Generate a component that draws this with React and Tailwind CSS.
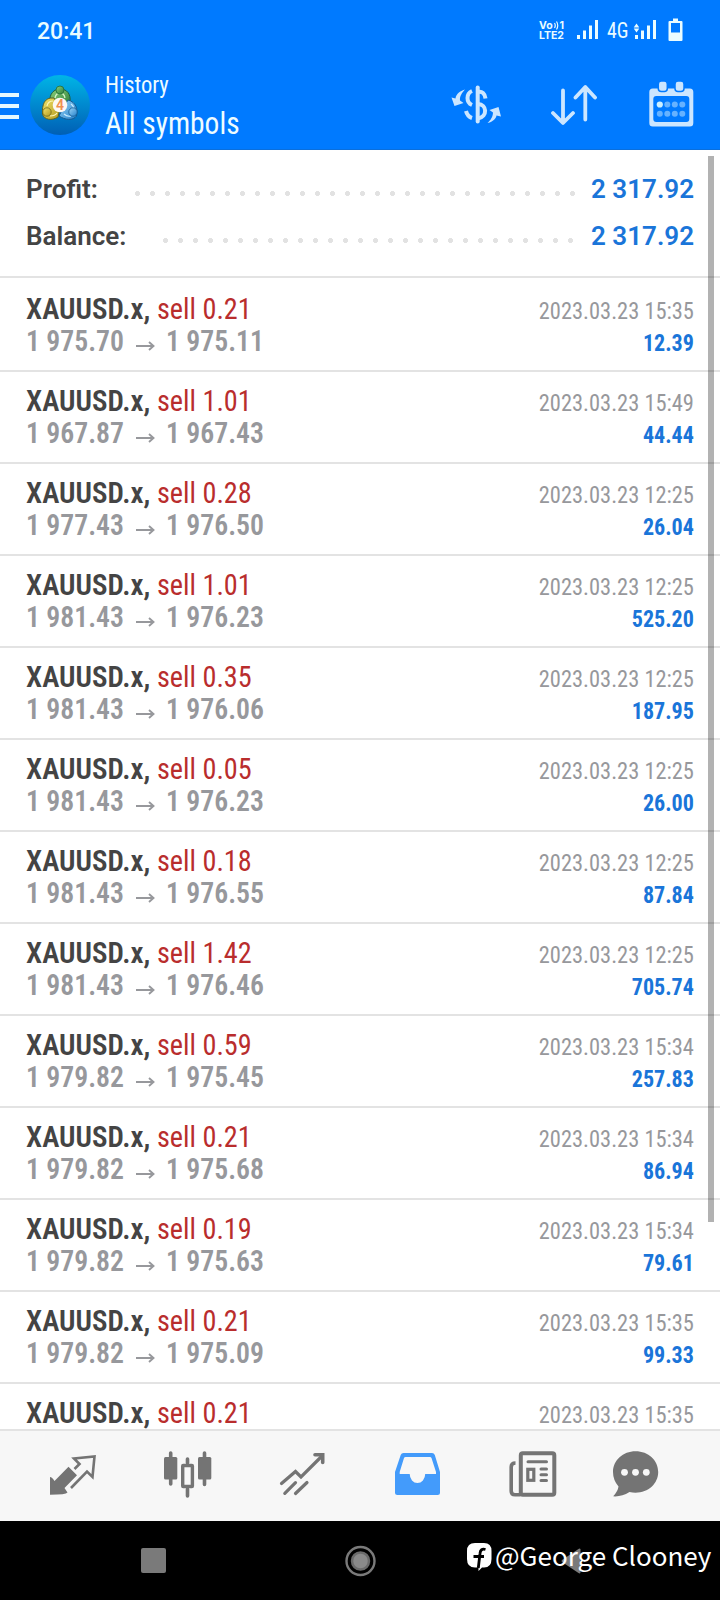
const trades = [
  { lots: '0.21', open: '1 975.70', close: '1 975.11', time: '2023.03.23 15:35', profit: '12.39' },
  { lots: '1.01', open: '1 967.87', close: '1 967.43', time: '2023.03.23 15:49', profit: '44.44' },
  { lots: '0.28', open: '1 977.43', close: '1 976.50', time: '2023.03.23 12:25', profit: '26.04' },
  { lots: '1.01', open: '1 981.43', close: '1 976.23', time: '2023.03.23 12:25', profit: '525.20' },
  { lots: '0.35', open: '1 981.43', close: '1 976.06', time: '2023.03.23 12:25', profit: '187.95' },
  { lots: '0.05', open: '1 981.43', close: '1 976.23', time: '2023.03.23 12:25', profit: '26.00' },
  { lots: '0.18', open: '1 981.43', close: '1 976.55', time: '2023.03.23 12:25', profit: '87.84' },
  { lots: '1.42', open: '1 981.43', close: '1 976.46', time: '2023.03.23 12:25', profit: '705.74' },
  { lots: '0.59', open: '1 979.82', close: '1 975.45', time: '2023.03.23 15:34', profit: '257.83' },
  { lots: '0.21', open: '1 979.82', close: '1 975.68', time: '2023.03.23 15:34', profit: '86.94' },
  { lots: '0.19', open: '1 979.82', close: '1 975.63', time: '2023.03.23 15:34', profit: '79.61' },
  { lots: '0.21', open: '1 979.82', close: '1 975.09', time: '2023.03.23 15:35', profit: '99.33' },
  { lots: '0.21', open: '1 979.82', close: '1 975.09', time: '2023.03.23 15:35', profit: '99.33' },
];

function StatusBar() {
  return (
    <div className="flex h-[60px] items-center pl-[37px] pr-[37px] text-[#eafcff]">
      <span className="flex-1 pt-[3px] text-[23px] font-medium leading-[57px]">20:41</span>
      <div className="mr-[13px] w-[25px] pt-px font-['Inter'] text-[10.500px] font-bold leading-[10px]">
        <div className="flex items-center justify-between">
          <span>Vo</span>
          <svg width="5" height="9" viewBox="0 0 5 9" fill="none" stroke="currentColor" strokeWidth="1.200">
            <path d="M0.500 2Q2 4.500 0.500 7M2.500 0.500Q5 4.500 2.500 8.500" />
          </svg>
          <span>1</span>
        </div>
        <div>LTE2</div>
      </div>
      <svg width="21" height="20" viewBox="0 0 21 20" fill="currentColor">
        <path d="M0 15h3v4H0zM6 10.500h3V19H6zM12 5.500h3V19h-3zM18 0h3v19h-3z" />
      </svg>
      <span className="ml-[9px] w-[25px] pt-px">
        <span className="inline-block origin-left scale-x-90 font-['Roboto_Condensed'] text-[22px] leading-[58px]">4G</span>
      </span>
      <svg width="24" height="20" viewBox="0 0 24 20" fill="currentColor">
        <path d="M3 15h3v4H3zM9 10.500h3V19H9zM15 5.500h3V19h-3zM21 0h3v19h-3z" />
        <path d="M4.500 3.500L7.300 7.500H1.700zM4.500 12.500L7.300 8.500H1.700z" />
      </svg>
      <svg className="ml-3" width="15" height="24" viewBox="0 0 15 24">
        <path d="M5 0.500h5v2.500h3.500q1 0 1 1V22q0 1-1 1h-12q-1 0-1-1V4q0-1 1-1H5z" fill="currentColor" />
        <path d="M3 5h9v9.500H3z" fill="#007aff" />
      </svg>
    </div>
  );
}

function Logo() {
  return (
    <svg width="60" height="60" viewBox="0 0 60 60">
      <defs>
        <linearGradient id="disc" x1="0" y1="0" x2="0" y2="1">
          <stop offset="0" stopColor="#00b5e6" />
          <stop offset="0.5" stopColor="#0089cf" />
          <stop offset="1" stopColor="#005fb4" />
        </linearGradient>
        <linearGradient id="green" x1="0" y1="0" x2="1" y2="1">
          <stop offset="0" stopColor="#8fd37c" />
          <stop offset="1" stopColor="#2b7d3a" />
        </linearGradient>
        <linearGradient id="yellow" x1="0" y1="0" x2="1" y2="1">
          <stop offset="0" stopColor="#f2e36a" />
          <stop offset="1" stopColor="#b39a20" />
        </linearGradient>
        <linearGradient id="blue" x1="0" y1="0" x2="1" y2="1">
          <stop offset="0" stopColor="#9ad4f6" />
          <stop offset="1" stopColor="#2482cc" />
        </linearGradient>
      </defs>
      <circle cx="30" cy="30" r="30" fill="url(#disc)" />
      <path d="M20 27C19 19 24 14 30 14C37 14 41 19 40 27L34 30H26Z" fill="url(#green)" stroke="#1f5f3c" strokeWidth="1" />
      <path d="M24 23C14 22 12 30 12.500 39C14 45 22 46 28 42L30 33Z" fill="url(#yellow)" stroke="#5f6420" strokeWidth="1" />
      <path d="M38 25C46 27 48 34 46.500 41C43 46 35 45 29 41L33 33Z" fill="url(#blue)" stroke="#145a92" strokeWidth="1" />
      <path d="M25 23Q26 18 30 18T35 23" fill="none" stroke="#d4f2c4" strokeWidth="1.300" />
      <path d="M17 31Q18 26 23 26M20 41Q25 41 27 38" fill="none" stroke="#fbf6b8" strokeWidth="1.200" />
      <path d="M41 29Q44 31 43.500 34M34 39Q37 42 41 41" fill="none" stroke="#c8ecff" strokeWidth="1.200" />
      <circle cx="30" cy="15" r="4" fill="url(#green)" stroke="#1f6b37" strokeWidth="0.800" />
      <circle cx="17" cy="37" r="4.200" fill="url(#yellow)" stroke="#6f6a1c" strokeWidth="0.800" />
      <circle cx="43" cy="37" r="4.200" fill="url(#blue)" stroke="#145a92" strokeWidth="0.800" />
      <circle cx="30" cy="30" r="7.300" fill="#fdf8f4" />
      <text x="30" y="35" textAnchor="middle" fontSize="14" fontWeight="600" fill="#f0904f">4</text>
    </svg>
  );
}

function Header() {
  return (
    <header className="h-[150px] shrink-0 border-b border-[#0b6fdc] bg-[#007aff]">
      <StatusBar />
      <div className="flex h-[89px] items-center pr-[26px]">
        <div className="mt-[33px] flex w-[19px] flex-col gap-[7px] self-start">
          <div className="h-1 bg-[#e4f8ff]" />
          <div className="h-1 bg-[#e4f8ff]" />
          <div className="h-1 bg-[#e4f8ff]" />
        </div>
        <div className="ml-[11px]">
          <Logo />
        </div>
        <div className="ml-[15px] flex-1 pt-0.5 font-['Roboto_Condensed'] text-[#eefcff]">
          <div className="origin-left scale-x-[0.94] text-[24px] leading-[34px]">History</div>
          <div className="origin-left scale-x-[0.92] text-[32px] leading-[42px]">All symbols</div>
        </div>
        <div className="flex items-center gap-[50px] text-[#cce6ff]">
          <svg width="50" height="46" viewBox="452 81.500 50 46" fill="none" stroke="currentColor" strokeWidth="4">
            <path d="M478.700 87V121" strokeLinecap="round" />
            <path d="M479 91.500C483 90.500 486 93 486.500 98" />
            <path d="M479 103.500C488 104 489 116 479 118" />
            <path d="M473 90.500C467 93 467 102 473 104.500" />
            <path d="M467 110.500C468 114.500 470 116.500 473 117.500" />
            <path d="M466 89C462 90 457 93 456.500 98L452.500 97L455.500 105.500L464.500 102.500L461 100C460.500 96 463 92 466 89Z" fill="currentColor" stroke="none" />
            <path d="M488.500 122.500C492 122 497 119 497.500 115L502 116L499.500 106.500L490.500 109.500L494 112C494 116 491.500 120 488.500 122.500Z" fill="currentColor" stroke="none" />
          </svg>
          <svg width="46" height="46" viewBox="551 81.500 46 46" fill="none" stroke="currentColor" strokeWidth="3.800" strokeLinecap="round" strokeLinejoin="round">
            <path d="M563 90V122M553 112.500L563 122.500L573 112.500" />
            <path d="M585.300 119V87M575.500 97L585.300 86.500L595 97" />
          </svg>
          <svg className="ml-0.5" width="45" height="46" viewBox="649 81.500 45 46" fill="currentColor" overflow="visible">
            <rect x="649.300" y="88" width="44" height="38" rx="3.500" />
            <rect x="653.300" y="95.500" width="36" height="26" rx="3" fill="#007aff" />
            <g stroke="#007aff" strokeWidth="1.500">
              <rect x="658.300" y="80.500" width="9" height="10.500" rx="3" />
              <rect x="675" y="80.500" width="9" height="10.500" rx="3" />
            </g>
            <g fill="#66b2ff">
              <circle cx="659.800" cy="104" r="3.100" fill="#cdf0ff" />
              <circle cx="667.300" cy="104" r="3" />
              <circle cx="674.800" cy="104" r="3" />
              <circle cx="682.300" cy="104" r="3" />
              <circle cx="659.800" cy="113.300" r="3" />
              <circle cx="667.300" cy="113.300" r="3" />
              <circle cx="674.800" cy="113.300" r="3" />
              <circle cx="682.300" cy="113.300" r="3" />
            </g>
          </svg>
        </div>
      </div>
    </header>
  );
}

function Summary() {
  return (
    <div className="h-32 shrink-0 border-b-2 border-[#e3e3e3] pl-[26px] pr-[26px] pt-4 text-[26px] font-semibold leading-[47px] text-[#444]">
      <div className="flex items-center">
        <span className="w-[104px]">Profit:</span>
        <span className="mt-[7px] h-[5px] w-[450px] bg-[radial-gradient(circle,#e2e2e2_2.200px,transparent_2.800px)] bg-[length:15px_5px]" />
        <span className="flex-1 text-right text-[#1a75d9]">2 317.92</span>
      </div>
      <div className="flex items-center">
        <span className="w-[132px]">Balance:</span>
        <span className="mt-[7px] h-[5px] w-[420px] bg-[radial-gradient(circle,#e2e2e2_2.200px,transparent_2.800px)] bg-[length:15px_5px]" />
        <span className="flex-1 text-right text-[#1a75d9]">2 317.92</span>
      </div>
    </div>
  );
}

function TradeRow({ trade }) {
  return (
    <div className="flex h-[92px] shrink-0 justify-between border-b-2 border-[#e3e3e3] px-[26px] pt-[13px] font-['Roboto_Condensed'] first:h-[94px] first:pt-[15px]">
      <div className="text-[30px] leading-8">
        <div className="flex">
          <span className="w-[131px]">
            <span className="inline-block origin-left scale-x-[0.965] font-semibold text-[#444]">XAUUSD.x,</span>
          </span>
          <span className="origin-left scale-x-[0.94] text-[#b92d2d]">sell {trade.lots}</span>
        </div>
        <div className="flex font-semibold text-[#97989c]">
          <span className="w-[109px]">
            <span className="inline-block origin-left scale-x-[0.925]">{trade.open}</span>
          </span>
          <svg className="mt-[15px]" width="20" height="12" viewBox="0 0 20 12" fill="none" stroke="currentColor" strokeWidth="1.900">
            <path d="M1 6H18M14 2L18.500 6L14 10" />
          </svg>
          <span className="ml-[11px] origin-left scale-x-[0.925]">{trade.close}</span>
        </div>
      </div>
      <div className="pt-0.5 text-right text-[24px] leading-8">
        <div className="origin-right scale-x-[0.935] text-[#97989c]">{trade.time}</div>
        <div className="origin-right scale-x-[0.92] font-bold text-[#1a75d9]">{trade.profit}</div>
      </div>
    </div>
  );
}

function TabBar() {
  return (
    <nav className="flex h-[92px] shrink-0 items-center gap-[55px] border-t-2 border-[#e3e3e3] bg-[#f7f7f7] pl-[42px] text-[#747474]">
      {/* Quotes */}
      <svg width="60" height="60" viewBox="42 1446 60 60" fill="none">
        <path d="M68.500 1466.700L77 1475.300L64.500 1488L67.500 1492.500Q66 1494.700 50 1494.700V1477Q52 1477 54.500 1481Z" fill="currentColor" />
        <path d="M74.500 1469L79.500 1464L74 1458.500L94.500 1456.500L92.500 1477L87 1471.500L71 1488" stroke="currentColor" strokeWidth="2.600" />
      </svg>
      {/* Chart */}
      <svg width="60" height="60" viewBox="157 1446 60 60" fill="none" stroke="currentColor" strokeWidth="3.600" strokeLinecap="round">
        <path d="M170.700 1453V1484M204.500 1453V1484.500M187.500 1459V1463M187.500 1489V1496" />
        <rect x="164" y="1457" width="13.300" height="22.500" rx="1.500" fill="currentColor" stroke="none" />
        <rect x="198" y="1457" width="13.300" height="22.500" rx="1.500" fill="currentColor" stroke="none" />
        <rect x="182.700" y="1465.500" width="9.700" height="21" rx="0.500" strokeWidth="3.400" />
      </svg>
      {/* Trade */}
      <svg width="60" height="60" viewBox="272 1446 60 60" fill="none" stroke="currentColor" strokeWidth="3.200" strokeLinecap="round">
        <path d="M281.500 1483.500L295.500 1471.500L301 1477L322 1456" />
        <path d="M315 1454.800H322.700V1462.500" strokeWidth="3.600" />
        <path d="M284.800 1493.300L295.500 1482.700M295.500 1493.500L307 1482.500" />
      </svg>
      {/* History */}
      <svg width="60" height="60" viewBox="387 1446 60 60" className="text-[#439bfb]">
        <path
          fillRule="evenodd"
          fill="currentColor"
          d="M403.500 1453H432Q434 1453 434.800 1455L440 1472V1492.500Q440 1495 437.500 1495H397.500Q395 1495 395 1492.500V1472L400.700 1455Q401.500 1453 403.500 1453ZM405.500 1457Q404.500 1457 404 1458L399.700 1472V1474H409.700A7.700 9 0 0 0 425.200 1474H436V1472L431.500 1458Q431 1457 430 1457Z"
        />
      </svg>
      {/* News */}
      <svg width="60" height="60" viewBox="502.500 1446 60 60" fill="none" stroke="currentColor" strokeWidth="4">
        <rect x="521.300" y="1453.300" width="33.500" height="41.500" rx="2" />
        <path d="M516 1463Q511.700 1463 511.700 1467V1491Q511.700 1494.800 515.500 1494.800H521" strokeWidth="3.600" />
        <path d="M528.500 1461.700H547M541.500 1469H547M541.500 1474.800H547M541.500 1480.500H547" strokeWidth="3" strokeLinecap="round" />
        <rect x="528.300" y="1469.300" width="6" height="11" strokeWidth="3.200" />
      </svg>
      {/* Messages */}
      <svg className="-ml-3" width="60" height="60" viewBox="605.500 1446 60 60" fill="currentColor">
        <path d="M636 1451.300C649 1451.300 658.700 1460.500 658.700 1472S649 1492.700 636 1492.700Q633 1492.700 630 1492Q622 1497 613.700 1496.300Q618.500 1491 619 1486.500Q613.500 1480 613.500 1472C613.500 1460.500 623.500 1451.300 636 1451.300Z" />
        <g fill="#f7f7f7">
          <circle cx="625" cy="1472.300" r="3.400" />
          <circle cx="636" cy="1472.300" r="3.400" />
          <circle cx="646.800" cy="1472.300" r="3.400" />
        </g>
      </svg>
    </nav>
  );
}

function SystemNav() {
  return (
    <div className="relative flex h-[79px] shrink-0 items-center bg-black pl-[141px]">
      <div className="h-[25px] w-[25px] rounded-[2px] bg-[#7a7a7a]" />
      <svg className="ml-[178px]" width="32" height="32" viewBox="0 0 32 32" fill="none">
        <circle cx="16.500" cy="16" r="14" stroke="#7a7a7a" strokeWidth="2.400" />
        <circle cx="16.500" cy="16" r="8.500" fill="#8a8a8a" stroke="#6a6a6a" strokeWidth="2.500" />
      </svg>
      <svg className="ml-[185px]" width="20" height="26" viewBox="0 0 20 26">
        <path d="M19.500 1.500V24.500Q19 26 17.500 25L1 14Q0 13 1 12L17.500 1Q19 0 19.500 1.500Z" fill="#7a7a7a" />
      </svg>
      {/* Account watermark */}
      <div className="absolute left-[467px] top-[14px] flex items-center text-white">
        <svg className="mt-1" width="25" height="28" viewBox="0 0 25 28">
          <path d="M8 0H17Q24.500 0 24.500 8V16Q24.500 24.500 17 24.500H15L11.500 28V24.500H8Q0 24.500 0 16V8Q0 0 8 0Z" fill="#fff" />
          <path d="M18.500 6.500Q13.500 5 13 10.500L11.300 25M6.500 13.500H17" fill="none" stroke="#000" strokeWidth="2.800" />
        </svg>
        <span className="ml-[3px] whitespace-nowrap font-['Noto_Sans_CJK_SC'] text-[26px] leading-10">@George Clooney</span>
      </div>
    </div>
  );
}

export default function App() {
  return (
    <div className="relative flex h-[1600px] w-[720px] flex-col overflow-hidden bg-white font-['Roboto',sans-serif]">
      <Header />
      <Summary />
      <div className="flex min-h-0 flex-1 flex-col overflow-hidden">
        {trades.map((trade, i) => (
          <TradeRow key={i} trade={trade} />
        ))}
      </div>
      <TabBar />
      <SystemNav />
      {/* Scroll indicator */}
      <div className="absolute left-[708px] top-[156px] h-[1066px] w-[6px] bg-black/30" />
    </div>
  );
}
